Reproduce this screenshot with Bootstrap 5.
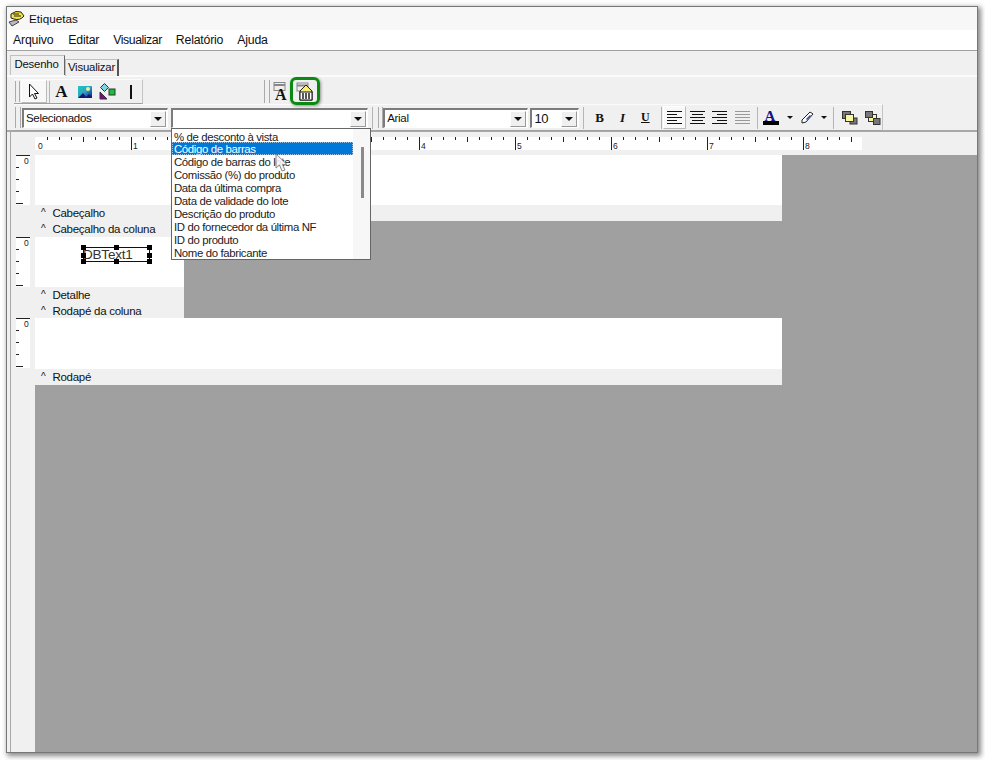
<!DOCTYPE html>
<html lang="pt"><head><meta charset="utf-8"><title>Etiquetas</title>
<link rel="stylesheet" href="https://cdn.jsdelivr.net/npm/bootstrap@5.3.0/dist/css/bootstrap.min.css">
<style>
html,body{height:760px;overflow:hidden;background:#fff}
body{font:12px/1 "Liberation Sans",Arial,sans-serif;color:#111;padding:7px 8px 8px 7px}
svg{display:block}
.win{height:745px;background:#f0f0f0;box-shadow:0 0 0 1px #777,2px 2px 5px 2px rgba(60,60,60,.6);position:relative}
.tit{height:23px;background:#f7f7f7;padding-left:1px;gap:4px;font-size:11.7px}
.mnu{height:21px;background:#fff;border-bottom:1px solid #a0a0a0;padding-left:6px;gap:14px;font-size:12.3px;letter-spacing:-.2px}
.mnu .m1{margin-right:1px}
.mnu .m3{letter-spacing:-.45px}
.tabz{height:26px;padding-left:3px;border-bottom:2px solid #fbfbfb}
.tabz .tb{font-size:11.4px;letter-spacing:-.2px;border:1px solid #c0c0c0;border-bottom:0;background:#f0f0f0;display:flex;align-items:center;justify-content:center}
.tb-on{width:55px;height:20px;margin-top:4px;padding:0 2px 1px 0;border-right:1px solid #666!important}
.tb-off{width:54px;height:17px;margin-top:8px;border-right:2px solid #555!important}
.rw1{height:27px;padding-left:7px}
.rw2{height:28px;padding-left:7px;border-bottom:2px solid #a8a8a8}
.bar{background:#f0f0f0;border-top:1px solid #fbfbfb;border-bottom:1px solid #a0a0a0;border-right:1px solid #c4c4c4}
.bar1{width:129px;height:25px;margin-top:2px}
.bar2{width:56px;height:25px;margin-top:2px;margin-left:121px;border:0;background:transparent}
.bar3{width:869px;height:27px}
.grip{width:6px;height:21px;margin:0 1px 0 1px;border-left:1px solid #aaa;border-right:1px solid #aaa}
.bar1 .grip{width:5px}
.bar1 .sep{margin:0 0 0 2px}
.bar2 .grip{margin:0 1.500px 0 0}
.sep{width:1px;height:22px;background:#b5b5b5;margin:0 3px}
.on{width:26px;height:23px;border:1px solid #fff;border-right-color:#bbb;border-bottom-color:#bbb;background:#f8f8f8;display:flex;align-items:center;justify-content:center}
.ic{width:23px;display:flex;align-items:center;justify-content:center;height:23px}
.cmb{height:20px;background:#fff;border:1px solid #fff;border-top:2px solid #7c7c7c;border-left:2px solid #7c7c7c;display:flex;justify-content:space-between;align-items:center;font-size:11.5px;letter-spacing:-.3px;padding-left:2px;margin-top:1px}
.cmb i{width:16px;height:16px;background:#f0f0f0;border:1px solid #fff;border-right-color:#999;border-bottom-color:#999;display:flex;align-items:center;justify-content:center;margin-right:1px}
.rul{height:23px;padding:5px 0 0 28px}
.rul,.gut{box-shadow:inset 3px 0 0 #f0f0f0,inset 4px 0 0 #a8a8a8}
.dz{height:597px;background:#a0a0a0}
.gut{width:28px;background:#f0f0f0;padding-left:9px;flex:none}
.cv{background:#fff;height:50px}
.wd{width:747px}.nr{width:149px}
.lab{height:16px;background:#f0f0f0;padding:2px 0 0 6px;gap:7px;font-size:11.5px;letter-spacing:-.27px;display:flex;align-items:center}
.lab b{font-weight:400;font-size:10px;position:relative;top:-1px}
.fill{flex:1 1 auto}
.dbt{margin:10px 0 0 48px;width:67px;height:15px;border:1px solid #111;font-size:13.500px;letter-spacing:-.2px;line-height:13px;position:relative;color:#333;white-space:nowrap}
.dbt em{font-style:normal;margin-left:-1px}
.hd{position:absolute;width:5px;height:5px;background:#000}
.drop{position:absolute;left:164px;top:121px;width:200px;height:132px;background:#fff;border:1px solid #666;z-index:5;padding-top:1px;border-radius:0}
.drop .list-group-item{border:0;padding:1px 0 0 2px;height:13px;line-height:12px;font-size:11.4px;letter-spacing:-.36px;color:#222;border-radius:0;background:transparent;white-space:nowrap;width:181px}
.drop .list-group-item.active{background:#0078d7;color:#fff;outline:1px dotted #9cc4e8;outline-offset:-1px}
.thumb{position:absolute;left:189px;top:18px;width:3px;height:51px;background:#8a8a8a}
.sbar{position:absolute;right:0;top:0;bottom:0;width:17px;background:#f7f7f7}
.cur{position:absolute;left:268px;top:146px;z-index:6}
.hilite{position:absolute;left:283px;top:70px;width:30px;height:28px;border:3px solid #0b8a12;border-radius:6px;box-shadow:1px 1px 3px rgba(0,0,0,.4);z-index:4}
</style></head><body>
<svg width="0" height="0" style="position:absolute"><defs>
<symbol id="vr" viewBox="0 0 14 50"><rect width="14" height="50" fill="#fff"/><path d="M0 .5H14M0 12.500H3M0 24.500H3M0 36.500H3M0 48.500H7" stroke="#222"/><text x="8" y="9" font-size="8.500" font-family="Liberation Sans" fill="#222">0</text></symbol>
<linearGradient id="gi" x1="0" y1="0" x2="1" y2="1"><stop offset="0" stop-color="#20c8c0"/><stop offset=".5" stop-color="#30a0c0"/><stop offset="1" stop-color="#101090"/></linearGradient>
</defs></svg>
<div class="win d-flex flex-column">
 <div class="tit d-flex align-items-center">
  <svg width="17" height="17" viewBox="0 0 17 17"><path d="M3 4Q8 0 13 2L16 6Q12 11 6 9L3 8Z" fill="#f5e23a" stroke="#222"/><path d="M5 4H11M6 6H13" stroke="#222"/><path d="M1 12L8 10L11 12L4 16Z" fill="#bbb" stroke="#444"/></svg>
  <span>Etiquetas</span>
 </div>
 <div class="mnu d-flex align-items-center"><span class="m1">Arquivo</span><span>Editar</span><span class="m3">Visualizar</span><span>Relatório</span><span>Ajuda</span></div>
 <div class="tabz d-flex"><div class="tb tb-on">Desenho</div><div class="tb tb-off">Visualizar</div></div>
 <div class="rw1 d-flex">
  <div class="bar bar1 d-flex align-items-center">
   <div class="grip"></div>
   <div class="on"><svg width="12" height="17" viewBox="0 0 12 17"><path d="M1.500 1V14L4.500 11L7 16L9 15L6.500 10.500H10.500Z" fill="#fff" stroke="#111"/></svg></div>
   <div class="sep"></div>
   <div class="ic" style="font:700 17px 'Liberation Serif',serif">A</div>
   <div class="ic"><svg width="14" height="12" viewBox="0 0 14 12"><rect width="14" height="12" fill="url(#gi)"/><path d="M0 12L5 7L9 12ZM7 12L11 8L14 12Z" fill="#111a70"/><circle cx="10" cy="3" r="2" fill="#e8f0a0"/></svg></div>
   <div class="ic"><svg width="17" height="17" viewBox="0 0 17 17"><path d="M5.500 .5L9.500 4.500L5.500 8.500L1.500 4.500Z" fill="#7fd4dc" stroke="#333"/><path d="M1 9L8 16H1Z" fill="#900090" stroke="#333"/><rect x="10" y="6" width="6" height="6" fill="#18c038" stroke="#333"/></svg></div>
   <div class="ic"><svg width="2" height="14"><rect width="2" height="14" fill="#111"/></svg></div>
  </div>
  <div class="bar bar2 d-flex align-items-center">
   <div class="grip" style="height:23px"></div>
   <div class="ic"><svg width="20" height="23" viewBox="0 0 20 23"><rect x="1" y="2.500" width="11" height="8" fill="#eee" stroke="#888"/><path d="M1 5H12" stroke="#888" stroke-width="2"/><text x="2" y="19.500" font-family="Liberation Serif" font-weight="700" font-size="16" fill="#111">A</text></svg></div>
   <div class="ic"><svg width="20" height="20" viewBox="0 0 20 20"><rect x="1" y="1" width="11" height="8" fill="#eee" stroke="#888"/><path d="M1 3.500H12" stroke="#888" stroke-width="2"/><path d="M4 9L10 3L16 9V18H4Z" fill="#f8ee70" stroke="#222"/><rect x="4" y="10" width="12" height="8" fill="#fff" stroke="#111"/><path d="M7 11V17M10 11V17M13 11V17" stroke="#111" stroke-width="1.400"/></svg></div>
  </div>
 </div>
 <div class="rw2 d-flex">
  <div class="bar bar3 d-flex align-items-center">
   <div class="grip"></div>
   <div class="cmb" style="width:147px"><span>Selecionados</span><i><svg width="8" height="4"><path d="M0 0H8L4 4Z" fill="#111"/></svg></i></div>
   <div class="cmb" style="width:198px;margin-left:3px"><span></span><i><svg width="8" height="4"><path d="M0 0H8L4 4Z" fill="#111"/></svg></i></div>
   <div class="sep" style="margin:0 5px 0 4px"></div>
   <div class="grip" style="margin:0;width:5px"></div>
   <div class="cmb" style="width:146px"><span>Arial</span><i><svg width="8" height="4"><path d="M0 0H8L4 4Z" fill="#111"/></svg></i></div>
   <div class="cmb" style="width:49px;margin-left:2px;font-size:13px"><span>10</span><i><svg width="8" height="4"><path d="M0 0H8L4 4Z" fill="#111"/></svg></i></div>
   <div class="sep" style="margin:0 4px 0 4px"></div>
   <div class="ic" style="font:700 13px 'Liberation Serif',serif">B</div>
   <div class="ic" style="font:italic 700 13px 'Liberation Serif',serif">I</div>
   <div class="ic" style="font:700 12px 'Liberation Serif',serif;text-decoration:underline">U</div>
   <div class="sep" style="margin:0 1px 0 4px"></div>
   <div class="on" style="width:23px"><svg width="15" height="13" viewBox="0 0 15 13"><path d="M0 .5H15M0 3.500H10M0 6.500H15M0 9.500H10M0 12.500H15" stroke="#111"/></svg></div>
   <div class="ic"><svg width="15" height="13" viewBox="0 0 15 13"><path d="M0 .5H15M2 3.500H13M0 6.500H15M2 9.500H13M0 12.500H15" stroke="#111"/></svg></div>
   <div class="ic"><svg width="15" height="13" viewBox="0 0 15 13"><path d="M0 .5H15M5 3.500H15M0 6.500H15M5 9.500H15M0 12.500H15" stroke="#111"/></svg></div>
   <div class="ic"><svg width="15" height="13" viewBox="0 0 15 13"><path d="M0 .5H15M0 3.500H15M0 6.500H15M0 9.500H15M0 12.500H15" stroke="#999"/></svg></div>
   <div class="sep" style="margin:0 5px 0 3px"></div>
   <div class="ic" style="width:17px"><svg width="17" height="17" viewBox="0 0 17 17"><text x="1.500" y="12" font-family="Liberation Serif" font-weight="700" font-size="15" fill="#14148a">A</text><rect y="12" width="16" height="4" fill="#000"/></svg></div>
   <svg width="6" height="3" style="margin-left:7px;margin-right:8px"><path d="M0 0H6L3 3Z" fill="#111"/></svg>
   <div class="ic" style="width:14px"><svg width="14" height="13" viewBox="0 0 14 13"><path d="M1 9L9 1L12 3L5 11L1 12Z" fill="#fff" stroke="#222"/><path d="M5 8L9 4L10 5L6 9Z" fill="#3848a8"/></svg></div>
   <svg width="6" height="3" style="margin-left:6px"><path d="M0 0H6L3 3Z" fill="#111"/></svg>
   <div class="sep" style="margin:0 7px 0 6px"></div>
   <div class="ic" style="width:17px"><svg width="16" height="14" viewBox="0 0 16 14"><rect x=".5" y=".5" width="8" height="7" fill="#777" stroke="#333"/><rect x="8" y="7" width="7" height="6" fill="#777" stroke="#333"/><rect x="3.500" y="3.500" width="8" height="7" fill="#f8f8a0" stroke="#333"/></svg></div>
   <div class="ic" style="width:19px;margin-left:5px"><svg width="16" height="14" viewBox="0 0 16 14"><rect x="3.500" y="3.500" width="8" height="7" fill="#f8f8a0" stroke="#333"/><rect x=".5" y=".5" width="7" height="6" fill="#777" stroke="#333"/><rect x="8.500" y="7.500" width="6.500" height="6" fill="#777" stroke="#333"/></svg></div>
  </div>
 </div>
 <div class="rul">
  <svg width="827" height="13" viewBox="0 0 827 13"><rect width="827" height="13" fill="#fff"/>
   <path d="M96.500 0V13M192.500 0V13M288.500 0V13M384.500 0V13M480.500 0V13M576.500 0V13M672.500 0V13M768.500 0V13" stroke="#222"/>
   <path d="M12.500 0V3M24.500 0V3M36.500 0V3M48.500 0V5M60.500 0V3M72.500 0V3M84.500 0V3M108.500 0V3M120.500 0V3M132.500 0V3M144.500 0V5M156.500 0V3M168.500 0V3M180.500 0V3M204.500 0V3M216.500 0V3M228.500 0V3M240.500 0V5M252.500 0V3M264.500 0V3M276.500 0V3M300.500 0V3M312.500 0V3M324.500 0V3M336.500 0V5M348.500 0V3M360.500 0V3M372.500 0V3M396.500 0V3M408.500 0V3M420.500 0V3M432.500 0V5M444.500 0V3M456.500 0V3M468.500 0V3M492.500 0V3M504.500 0V3M516.500 0V3M528.500 0V5M540.500 0V3M552.500 0V3M564.500 0V3M588.500 0V3M600.500 0V3M612.500 0V3M624.500 0V5M636.500 0V3M648.500 0V3M660.500 0V3M684.500 0V3M696.500 0V3M708.500 0V3M720.500 0V5M732.500 0V3M744.500 0V3M756.500 0V3M780.500 0V3M792.500 0V3M804.500 0V3M816.500 0V5" stroke="#222"/>
   <g font-family="Liberation Sans" font-size="8.500" fill="#222"><text x="3" y="12">0</text><text x="98" y="12">1</text><text x="194" y="12">2</text><text x="290" y="12">3</text><text x="386" y="12">4</text><text x="482" y="12">5</text><text x="578" y="12">6</text><text x="674" y="12">7</text><text x="770" y="12">8</text></g>
  </svg>
 </div>
 <div class="dz d-flex flex-column">
  <div class="d-flex"><div class="gut"><svg width="14" height="50"><use href="#vr"/></svg></div><div class="cv wd"></div></div>
  <div class="d-flex"><div class="gut"></div><div class="lab wd"><b>^</b>Cabeçalho</div></div>
  <div class="d-flex"><div class="gut"></div><div class="lab nr text-nowrap"><b>^</b>Cabeçalho da coluna</div></div>
  <div class="d-flex"><div class="gut"><svg width="14" height="50"><use href="#vr"/></svg></div><div class="cv nr"><div class="dbt"><em>DBText1</em>
    <span class="hd" style="left:-3px;top:-3px"></span><span class="hd" style="left:30px;top:-3px"></span><span class="hd" style="right:-3px;top:-3px"></span><span class="hd" style="left:-3px;top:5px"></span><span class="hd" style="right:-3px;top:5px"></span><span class="hd" style="left:-3px;bottom:-3px"></span><span class="hd" style="left:30px;bottom:-3px"></span><span class="hd" style="right:-3px;bottom:-3px"></span></div></div></div>
  <div class="d-flex"><div class="gut"></div><div class="lab nr"><b>^</b>Detalhe</div></div>
  <div class="d-flex"><div class="gut"></div><div class="lab nr" style="height:15px"><b>^</b>Rodapé da coluna</div></div>
  <div class="d-flex"><div class="gut"><svg width="14" height="50"><use href="#vr"/></svg></div><div class="cv wd" style="height:51px"></div></div>
  <div class="d-flex"><div class="gut"></div><div class="lab wd"><b>^</b>Rodapé</div></div>
  <div class="d-flex fill"><div class="gut"></div></div>
 </div>
 <div class="hilite"></div>
 <div class="drop">
  <div class="sbar"></div><div class="thumb"></div>
  <div class="list-group list-group-flush" style="position:relative">
   <div class="list-group-item">% de desconto à vista</div>
   <div class="list-group-item active">Código de barras</div>
   <div class="list-group-item">Código de barras do lote</div>
   <div class="list-group-item">Comissão (%) do produto</div>
   <div class="list-group-item">Data da última compra</div>
   <div class="list-group-item">Data de validade do lote</div>
   <div class="list-group-item">Descrição do produto</div>
   <div class="list-group-item">ID do fornecedor da última NF</div>
   <div class="list-group-item">ID do produto</div>
   <div class="list-group-item">Nome do fabricante</div>
  </div>
 </div>
 <svg class="cur" width="13" height="19" viewBox="0 0 13 19"><path d="M1 1V15L4.500 12L7 18L10 17L7.500 11.500H12Z" fill="#f4f4f4" fill-opacity=".92" stroke="#8a8a8a"/></svg>
</div>
<script src="https://cdn.jsdelivr.net/npm/bootstrap@5.3.0/dist/js/bootstrap.bundle.min.js"></script>
</body></html>
